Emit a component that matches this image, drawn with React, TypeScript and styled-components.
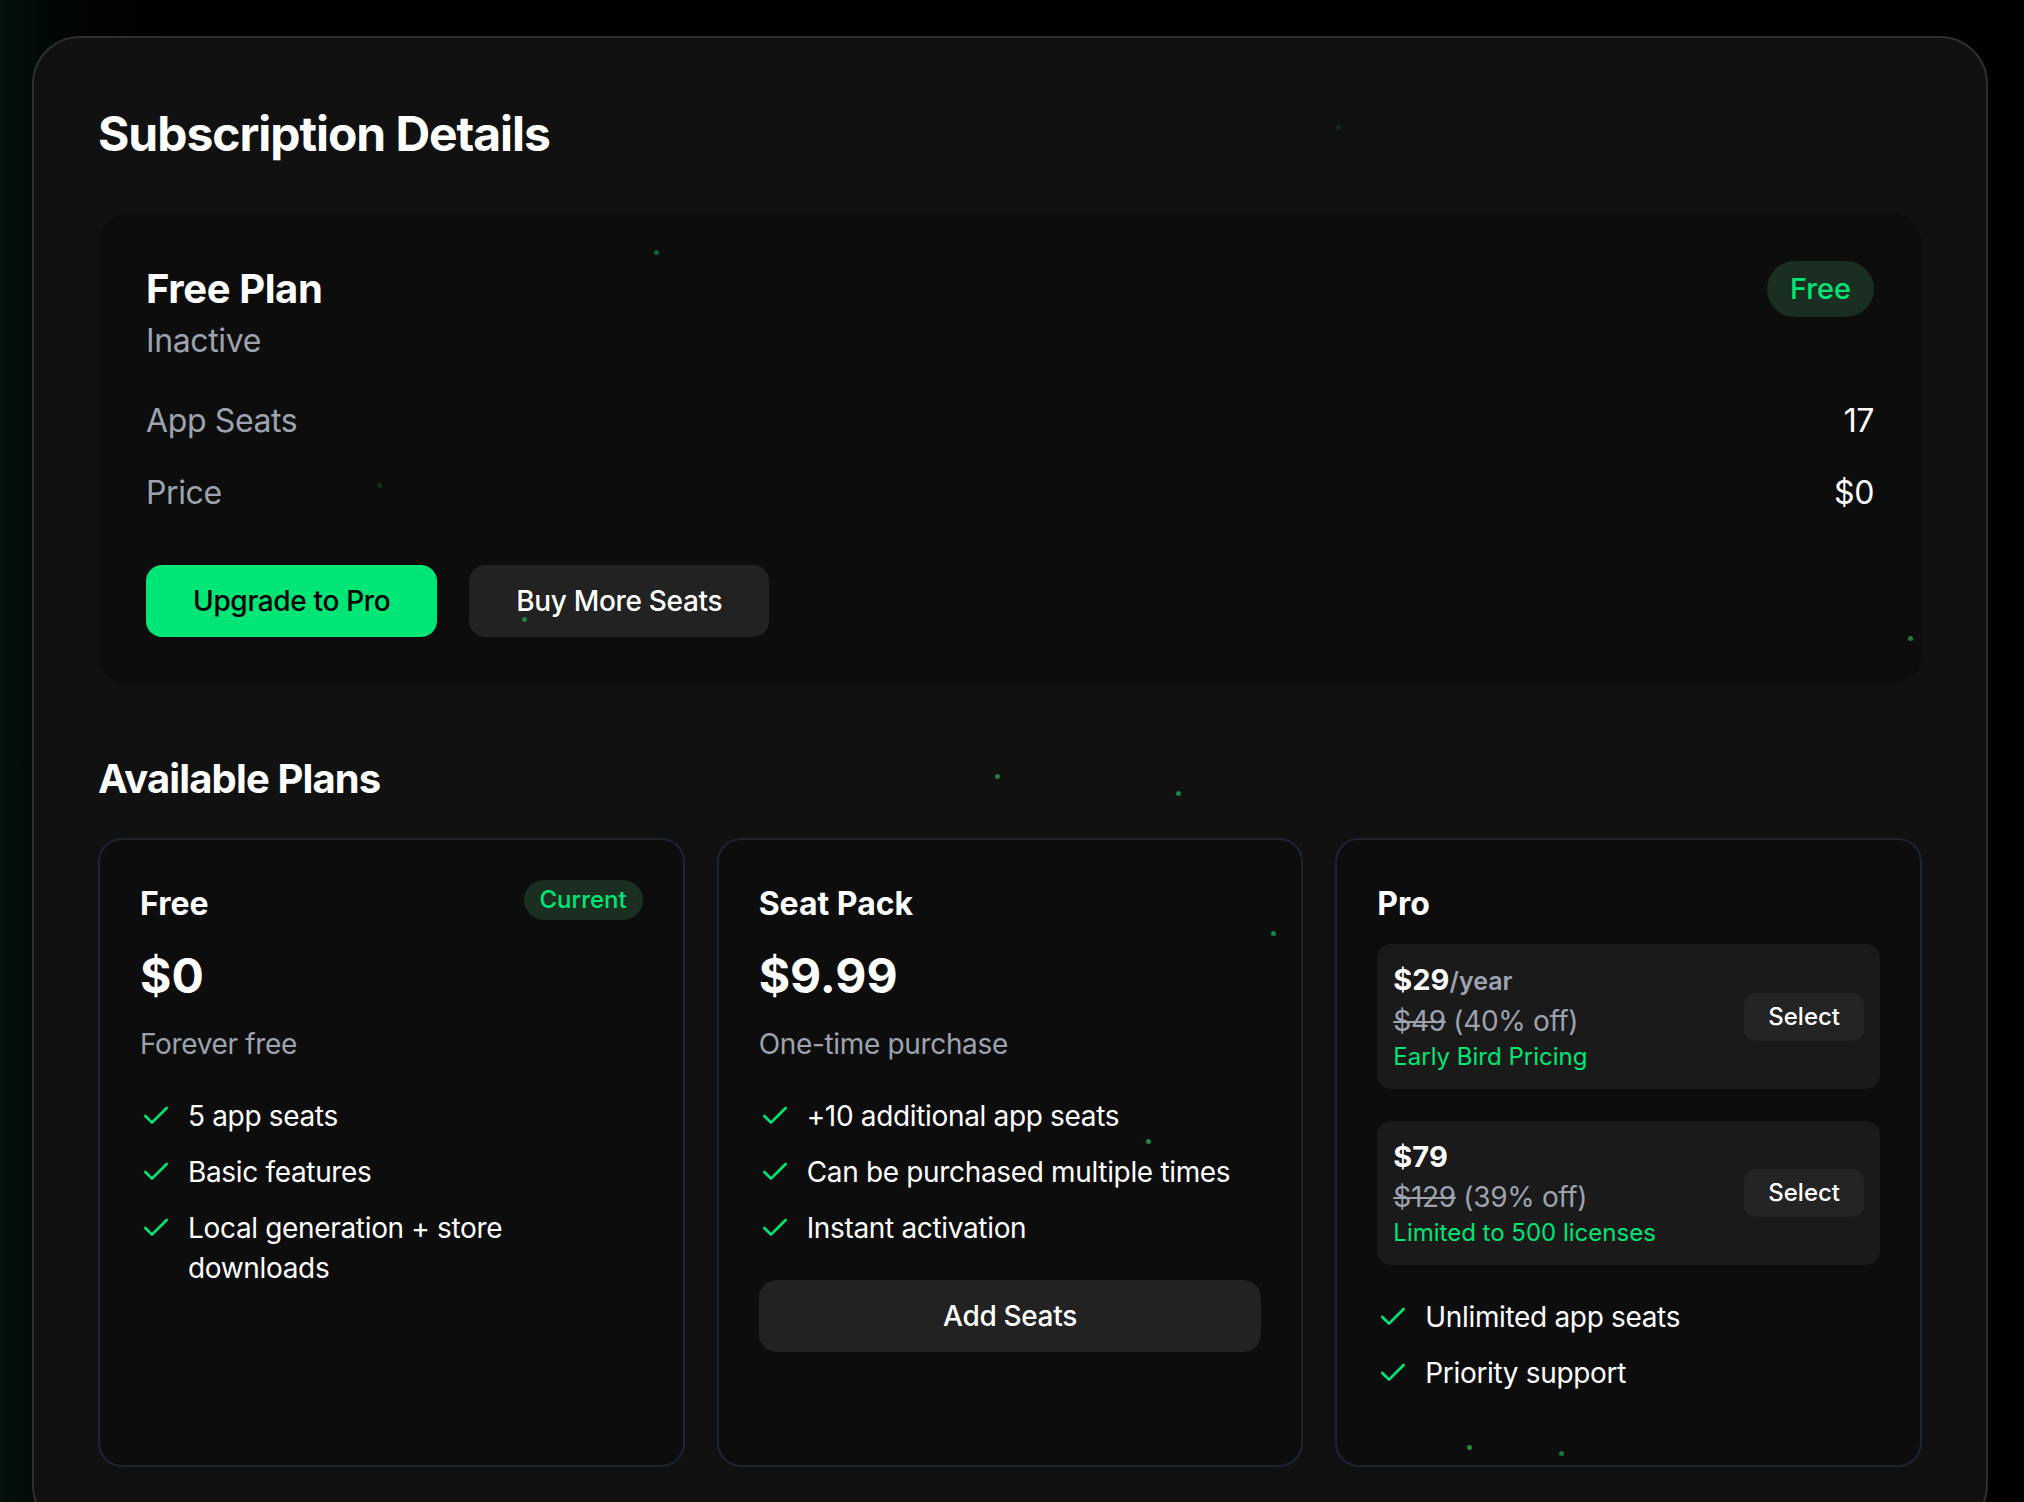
import React from 'react';
import styled, { createGlobalStyle } from 'styled-components';
import { Check } from 'lucide-react';

const GREEN = '#00e676';
const MUTED = '#9ca3af';
const TIGHT = '-0.012em';

const GlobalStyle = createGlobalStyle`
  * { box-sizing: border-box; }
  html, body { margin: 0; padding: 0; background: #000; }
  body {
    font-family: Inter, "Noto Sans", "Liberation Sans", sans-serif;
    color: #fff;
    -webkit-font-smoothing: antialiased;
  }
`;

const Page = styled.div`
  position: relative;
  min-height: 100vh;
  padding: 36px 36px 0 32px;
  background: linear-gradient(90deg, #03120a 0px, #020804 50px, #000 160px);
  overflow: hidden;
`;

const Shell = styled.section`
  background: #111111;
  border: 2px solid #2f2f2f;
  border-radius: 48px;
  padding: 64px;
`;

const PageTitle = styled.h1`
  margin: 0 0 47px;
  font-size: 48px;
  line-height: 64px;
  font-weight: 700;
  letter-spacing: -0.022em;
`;

const CurrentPlan = styled.div`
  background: #0d0d0d;
  border-radius: 32px;
  padding: 48px;
`;

const PlanHeader = styled.div`
  display: flex;
  justify-content: space-between;
  align-items: flex-start;
  margin-bottom: 32px;
`;

const PlanName = styled.h2`
  margin: 0;
  font-size: 40px;
  line-height: 56px;
  font-weight: 700;
  letter-spacing: -0.01em;
`;

const PlanStatus = styled.div`
  font-size: 32px;
  line-height: 48px;
  color: ${MUTED};
  letter-spacing: ${TIGHT};
`;

const Pill = styled.span<{ $small?: boolean }>`
  display: inline-block;
  border-radius: 9999px;
  background: #1a2e21;
  color: ${GREEN};
  font-weight: 500;
  font-size: ${(p) => (p.$small ? '24px' : '29px')};
  line-height: ${(p) => (p.$small ? '32px' : '40px')};
  padding: ${(p) => (p.$small ? '4px 16px' : '8px 23px')};
`;

const DetailList = styled.div`
  display: flex;
  flex-direction: column;
  gap: 24px;
`;

const DetailRow = styled.div`
  display: flex;
  justify-content: space-between;
  font-size: 32px;
  line-height: 48px;
  letter-spacing: ${TIGHT};
`;

const DetailLabel = styled.span`
  color: ${MUTED};
`;

const DetailValue = styled.span`
  color: #fff;
`;

const Actions = styled.div`
  display: flex;
  gap: 32px;
  margin-top: 48px;
`;

const ActionButton = styled.button<{ $primary?: boolean }>`
  border: none;
  border-radius: 16px;
  padding: 16px 47px;
  font-family: inherit;
  font-size: 28px;
  line-height: 40px;
  font-weight: 500;
  letter-spacing: ${TIGHT};
  cursor: pointer;
  background: ${(p) => (p.$primary ? GREEN : '#222222')};
  color: ${(p) => (p.$primary ? '#000' : '#fff')};
`;

const SectionTitle = styled.h2`
  margin: 66px 0 31px;
  font-size: 40px;
  line-height: 56px;
  font-weight: 700;
  letter-spacing: -0.022em;
`;

const PlanGrid = styled.div`
  display: grid;
  grid-template-columns: repeat(3, 1fr);
  gap: 32px;
`;

const PlanCard = styled.div`
  display: flex;
  flex-direction: column;
  background: #0d0d0d;
  border: 2px solid #1e2531;
  border-radius: 24px;
  padding: 40px;
`;

const CardHead = styled.div`
  display: flex;
  justify-content: space-between;
  align-items: flex-start;
  margin-bottom: 16px;
`;

const CardTitle = styled.h3`
  margin: 0;
  font-size: 32px;
  line-height: 48px;
  font-weight: 700;
`;

const Price = styled.div`
  font-size: 48px;
  line-height: 64px;
  font-weight: 700;
  margin-bottom: 16px;
`;

const PriceNote = styled.div`
  font-size: 28px;
  line-height: 40px;
  color: ${MUTED};
  letter-spacing: ${TIGHT};
  margin-bottom: 32px;
`;

const Features = styled.ul`
  list-style: none;
  margin: 0 0 32px;
  padding: 0;
  display: flex;
  flex-direction: column;
  gap: 16px;
`;

const Feature = styled.li`
  display: flex;
  align-items: flex-start;
  gap: 16px;
  font-size: 28px;
  line-height: 40px;
  letter-spacing: ${TIGHT};
  color: #fff;

  svg {
    flex: none;
    margin-top: 4px;
    color: ${GREEN};
  }
`;

const WideButton = styled.button`
  width: 100%;
  border: none;
  border-radius: 18px;
  padding: 16px;
  background: #222222;
  color: #fff;
  font-family: inherit;
  font-size: 28px;
  line-height: 40px;
  font-weight: 500;
  letter-spacing: ${TIGHT};
  cursor: pointer;
`;

const Offers = styled.div`
  display: flex;
  flex-direction: column;
  gap: 32px;
  margin-bottom: 32px;
`;

const Offer = styled.div`
  display: flex;
  justify-content: space-between;
  align-items: center;
  background: #1a1a1a;
  border-radius: 14px;
  padding: 16px;
`;

const OfferPrice = styled.div`
  font-size: 29px;
  line-height: 40px;
  font-weight: 700;
  color: #fff;
`;

const Period = styled.span`
  font-size: 25px;
  font-weight: 600;
  color: ${MUTED};
`;

const OfferWas = styled.div`
  font-size: 28px;
  line-height: 40px;
  letter-spacing: ${TIGHT};
  color: ${MUTED};
`;

const Struck = styled.span`
  text-decoration: line-through;
`;

const OfferTag = styled.div`
  font-size: 24px;
  line-height: 32px;
  color: ${GREEN};
`;

const SelectButton = styled.button`
  border: none;
  border-radius: 12px;
  padding: 8px 24px;
  background: #242424;
  color: #fff;
  font-family: inherit;
  font-size: 24px;
  line-height: 32px;
  font-weight: 500;
  cursor: pointer;
`;

const Particles = styled.div`
  position: absolute;
  inset: 0;
  pointer-events: none;
`;

const Particle = styled.span`
  position: absolute;
  width: 5px;
  height: 5px;
  border-radius: 50%;
  background: #1fa650;
`;

const particles = [
  { x: 654, y: 250, o: 0.55 },
  { x: 1336, y: 125, o: 0.2 },
  { x: 377, y: 483, o: 0.25 },
  { x: 522, y: 617, o: 0.7 },
  { x: 1908, y: 636, o: 0.75 },
  { x: 995, y: 774, o: 0.75 },
  { x: 1176, y: 791, o: 0.8 },
  { x: 1271, y: 931, o: 0.8 },
  { x: 1146, y: 1139, o: 0.8 },
  { x: 1467, y: 1445, o: 0.85 },
  { x: 1559, y: 1451, o: 0.7 },
];

type Offering = { price: string; period?: string; was: string; off: string; tag: string };

const offerings: Offering[] = [
  { price: '$29', period: '/year', was: '$49', off: '(40% off)', tag: 'Early Bird Pricing' },
  { price: '$79', was: '$129', off: '(39% off)', tag: 'Limited to 500 licenses' },
];

const FeatureList = ({ items }: { items: string[] }) => (
  <Features>
    {items.map((item) => (
      <Feature key={item}>
        <Check size={32} strokeWidth={2} />
        <span>{item}</span>
      </Feature>
    ))}
  </Features>
);

export default function App() {
  return (
    <>
      <GlobalStyle />
      <Page>
        <Shell>
          <PageTitle>Subscription Details</PageTitle>

          <CurrentPlan>
            <PlanHeader>
              <div>
                <PlanName>Free Plan</PlanName>
                <PlanStatus>Inactive</PlanStatus>
              </div>
              <Pill>Free</Pill>
            </PlanHeader>
            <DetailList>
              <DetailRow>
                <DetailLabel>App Seats</DetailLabel>
                <DetailValue>17</DetailValue>
              </DetailRow>
              <DetailRow>
                <DetailLabel>Price</DetailLabel>
                <DetailValue>$0</DetailValue>
              </DetailRow>
            </DetailList>
            <Actions>
              <ActionButton $primary>Upgrade to Pro</ActionButton>
              <ActionButton>Buy More Seats</ActionButton>
            </Actions>
          </CurrentPlan>

          <SectionTitle>Available Plans</SectionTitle>

          <PlanGrid>
            <PlanCard>
              <CardHead>
                <CardTitle>Free</CardTitle>
                <Pill $small>Current</Pill>
              </CardHead>
              <Price>$0</Price>
              <PriceNote>Forever free</PriceNote>
              <FeatureList items={['5 app seats', 'Basic features', 'Local generation + store downloads']} />
            </PlanCard>

            <PlanCard>
              <CardHead>
                <CardTitle>Seat Pack</CardTitle>
              </CardHead>
              <Price>$9.99</Price>
              <PriceNote>One-time purchase</PriceNote>
              <FeatureList items={['+10 additional app seats', 'Can be purchased multiple times', 'Instant activation']} />
              <WideButton>Add Seats</WideButton>
            </PlanCard>

            <PlanCard>
              <CardHead>
                <CardTitle>Pro</CardTitle>
              </CardHead>
              <Offers>
                {offerings.map((o) => (
                  <Offer key={o.price}>
                    <div>
                      <OfferPrice>
                        {o.price}
                        {o.period && <Period>{o.period}</Period>}
                      </OfferPrice>
                      <OfferWas>
                        <Struck>{o.was}</Struck> {o.off}
                      </OfferWas>
                      <OfferTag>{o.tag}</OfferTag>
                    </div>
                    <SelectButton>Select</SelectButton>
                  </Offer>
                ))}
              </Offers>
              <FeatureList items={['Unlimited app seats', 'Priority support']} />
            </PlanCard>
          </PlanGrid>
        </Shell>

        <Particles>
          {particles.map((p, i) => (
            <Particle key={i} style={{ left: p.x, top: p.y, opacity: p.o }} />
          ))}
        </Particles>
      </Page>
    </>
  );
}
